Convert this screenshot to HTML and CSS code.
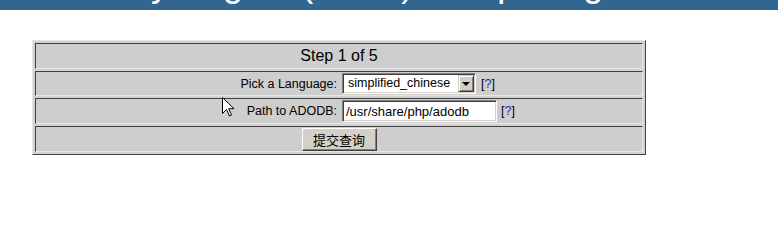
FILE: index.html
```html
<!DOCTYPE html>
<html>
  <head>
    <title>Setup</title>
    <link rel="stylesheet" href="styles.css">
  </head>
  <body>
    <div class="banner">
      <h1>Library Engine (v2.00) Setup Program</h1>
    </div>

    <form class="setup">
      <div class="row title">Step 1 of 5</div>
      <div class="row field lang">
        <label class="label">Pick a Language:</label>
        <span class="control">
          <span class="select"><span class="value">simplified_chinese</span><span class="arrow"></span></span>
          <span class="help">[<a href="#">?</a>]</span>
        </span>
      </div>
      <div class="row field">
        <label class="label">Path to ADODB:</label>
        <span class="control">
          <input class="text" type="text" value="/usr/share/php/adodb">
          <span class="help">[<a href="#">?</a>]</span>
        </span>
      </div>
      <div class="row submit">
        <button type="button" class="button">提交查询</button>
      </div>
    </form>

    <svg class="cursor" width="13" height="20" viewBox="0 0 13 20">
      <path d="M0.5 0.5 L0.5 16.5 L4.5 12.5 L7.5 19 L9.5 18 L6.7 11.7 L12 11.7 Z" fill="#fff" stroke="#000" stroke-width="1"/>
    </svg>
  </body>
</html>
```

FILE: styles.css
```css
body {
  margin: 0;
  background-color: #fff;
  font-family: "Liberation Sans", Arial, sans-serif;
  position: relative;
}
.banner {
  height: 10px;
  overflow: hidden;
  background-color: #33668f;
}
.banner h1 {
  margin: -34px 0 0 0;
  padding-left: 59px;
  font-size: 36px;
  line-height: 36px;
  font-weight: normal;
  color: #fff;
  white-space: nowrap;
}
.setup {
  width: 608px;
  margin: 30px 0 0 32px;
  padding: 2px;
  border: 1px solid;
  border-color: #e6e6e6 #404040 #404040 #e6e6e6;
  background-color: #d2d2d2;
  display: flex;
  flex-direction: column;
  gap: 2px;
}
.row {
  height: 24px;
  border: 1px solid;
  border-color: #404040 #e6e6e6 #e6e6e6 #404040;
  background-color: #cecece;
  font-size: 12.5px;
  color: #000;
}
.row.lang {
  height: 23px;
}
.title {
  display: flex;
  align-items: center;
  justify-content: center;
  font-size: 16px;
}
.field {
  display: grid;
  grid-template-columns: 302px 1fr;
  column-gap: 4px;
  align-items: center;
}
.label {
  text-align: right;
  padding-right: 1px;
}
.control {
  display: flex;
  align-items: center;
  gap: 5px;
}
.select {
  box-sizing: border-box;
  width: 134px;
  height: 21px;
  padding-left: 5px;
  border: 1px solid;
  border-color: #808080 #fff #fff #808080;
  box-shadow: inset 1px 1px #404040, inset -1px -1px #d4d0c8;
  background-color: #fff;
  font-size: 12.5px;
  line-height: 19px;
  display: flex;
  justify-content: space-between;
  align-items: center;
}
.value {
  white-space: nowrap;
}
.arrow {
  box-sizing: border-box;
  flex: none;
  width: 16px;
  height: 17px;
  margin-right: 1px;
  border: 1px solid;
  border-color: #d4d0c8 #404040 #404040 #d4d0c8;
  box-shadow: inset 1px 1px #fff, inset -1px -1px #808080;
  background-color: #d4d0c8;
  display: flex;
  align-items: center;
  justify-content: center;
}
.arrow::after {
  content: "";
  border-left: 4px solid transparent;
  border-right: 4px solid transparent;
  border-top: 4px solid #000;
  margin-top: 1px;
}
.text {
  box-sizing: border-box;
  width: 155px;
  height: 22px;
  margin: 0;
  padding: 0 3px;
  border: 1px solid;
  border-color: #808080 #fff #fff #808080;
  box-shadow: inset 1px 1px #404040, inset -1px -1px #d4d0c8;
  background-color: #fff;
  font-family: "Liberation Sans", Arial, sans-serif;
  font-size: 13px;
  color: #000;
  outline: none;
}
.control .text + .help {
  margin-left: -1px;
}
.help a {
  color: #1c2fa8;
  text-decoration: none;
}
.submit {
  display: flex;
  align-items: center;
  justify-content: center;
}
.button {
  box-sizing: border-box;
  width: 75px;
  height: 23px;
  margin: 0;
  padding: 0;
  border: 1px solid;
  border-color: #fff #404040 #404040 #fff;
  box-shadow: inset -1px -1px #808080;
  background-color: #d4d0c8;
  font-family: "Liberation Sans", "Noto Sans CJK SC", sans-serif;
  font-size: 13px;
  color: #000;
}
.cursor {
  position: absolute;
  left: 222px;
  top: 97px;
}
```
